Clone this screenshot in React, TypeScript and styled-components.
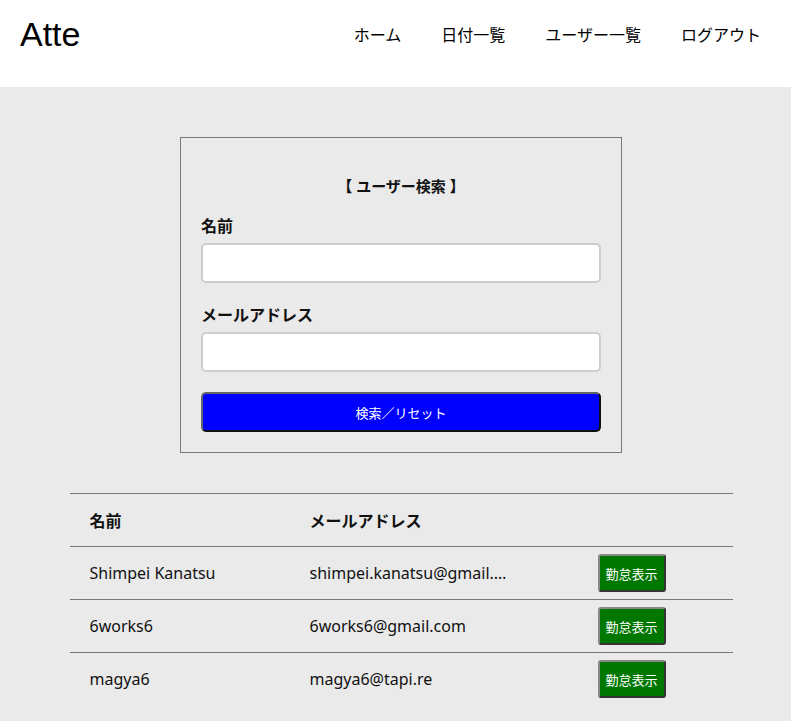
import React from 'react';
import styled, { createGlobalStyle } from 'styled-components';

const GlobalStyle = createGlobalStyle`
  html, body {
    margin: 0;
    padding: 0;
    background: #eaeaea;
  }
  body {
    font-family: "Liberation Sans", "Noto Sans CJK JP", sans-serif;
    color: #111;
  }
`;

const Header = styled.header`
  height: 87px;
  background: #fff;
  display: flex;
  align-items: flex-start;
  justify-content: space-between;
  padding: 0 30px 0 20px;
  box-sizing: border-box;
`;

const Logo = styled.h1`
  margin: 0;
  height: 68px;
  line-height: 68px;
  font-size: 34px;
  font-weight: 400;
  color: #000;
`;

const Nav = styled.nav`
  height: 68px;
  display: flex;
  align-items: center;
  gap: 40px;
`;

const NavLink = styled.a`
  font-size: 16px;
  color: #000;
  text-decoration: none;
  cursor: pointer;
`;

const Main = styled.main`
  padding: 50px 0 40px 11px;
  display: flex;
  flex-direction: column;
  align-items: center;
  font-family: "Noto Sans", "Noto Sans CJK JP", sans-serif;
`;

const SearchBox = styled.form`
  width: 442px;
  box-sizing: border-box;
  border: 1px solid #7a7a7a;
  padding: 36px 20px 20px;
  display: flex;
  flex-direction: column;
`;

const SearchTitle = styled.h2`
  margin: 0 0 16px;
  text-align: center;
  font-size: 15px;
  font-weight: 700;
  line-height: 24px;
`;

const Label = styled.label`
  font-size: 16px;
  font-weight: 700;
  line-height: 24px;
  margin-bottom: 5px;
`;

const Input = styled.input`
  height: 40px;
  box-sizing: border-box;
  border: 2px solid #cdcdcd;
  border-radius: 5px;
  background: #fff;
  margin-bottom: 20px;
  outline: none;
`;

const SubmitButton = styled.button`
  height: 40px;
  border: 2px outset #666;
  border-radius: 5px;
  background: #0000ff;
  color: #fff;
  font-family: inherit;
  font-size: 13px;
  cursor: pointer;
`;

const Table = styled.table`
  width: 663px;
  margin-top: 40px;
  border-collapse: collapse;
  border-top: 1px solid #777;
  table-layout: fixed;
`;

const Row = styled.tr<{ $last?: boolean }>`
  height: 53px;
  border-bottom: ${(p) => (p.$last ? 'none' : '1px solid #777')};
`;

const HeadCell = styled.th<{ $w?: number }>`
  text-align: left;
  font-size: 16px;
  font-weight: 700;
  padding: 0 20px;
  width: ${(p) => (p.$w ? `${p.$w}px` : 'auto')};
`;

const Cell = styled.td`
  font-size: 16px;
  padding: 0 20px;
  white-space: nowrap;
`;

const EmailText = styled.span`
  display: block;
  max-width: 200px;
  overflow: hidden;
  white-space: nowrap;
  text-overflow: ellipsis;
`;

const AttendanceButton = styled.button`
  height: 38px;
  padding: 0 6px;
  border: 2px outset #888;
  border-radius: 3px;
  background: #007700;
  color: #fff;
  font-family: inherit;
  font-size: 13px;
  cursor: pointer;
`;

const users = [
  { name: 'Shimpei Kanatsu', email: 'shimpei.kanatsu@gmail.com' },
  { name: '6works6', email: '6works6@gmail.com' },
  { name: 'magya6', email: 'magya6@tapi.re' },
];

const App = () => {
  return (
    <>
      <GlobalStyle />
      <Header>
        <Logo>Atte</Logo>
        <Nav>
          <NavLink>ホーム</NavLink>
          <NavLink>日付一覧</NavLink>
          <NavLink>ユーザー一覧</NavLink>
          <NavLink>ログアウト</NavLink>
        </Nav>
      </Header>
      <Main>
        <SearchBox onSubmit={(e) => e.preventDefault()}>
          <SearchTitle>【 ユーザー検索 】</SearchTitle>
          <Label>名前</Label>
          <Input type="text" />
          <Label>メールアドレス</Label>
          <Input type="text" />
          <SubmitButton type="submit">検索／リセット</SubmitButton>
        </SearchBox>
        <Table>
          <thead>
            <Row>
              <HeadCell $w={180}>名前</HeadCell>
              <HeadCell $w={248}>メールアドレス</HeadCell>
              <HeadCell />
            </Row>
          </thead>
          <tbody>
            {users.map((u, i) => (
              <Row key={u.email} $last={i === users.length - 1}>
                <Cell>{u.name}</Cell>
                <Cell>
                  <EmailText>{u.email}</EmailText>
                </Cell>
                <Cell>
                  <AttendanceButton>勤怠表示</AttendanceButton>
                </Cell>
              </Row>
            ))}
          </tbody>
        </Table>
      </Main>
    </>
  );
};

export default App;
